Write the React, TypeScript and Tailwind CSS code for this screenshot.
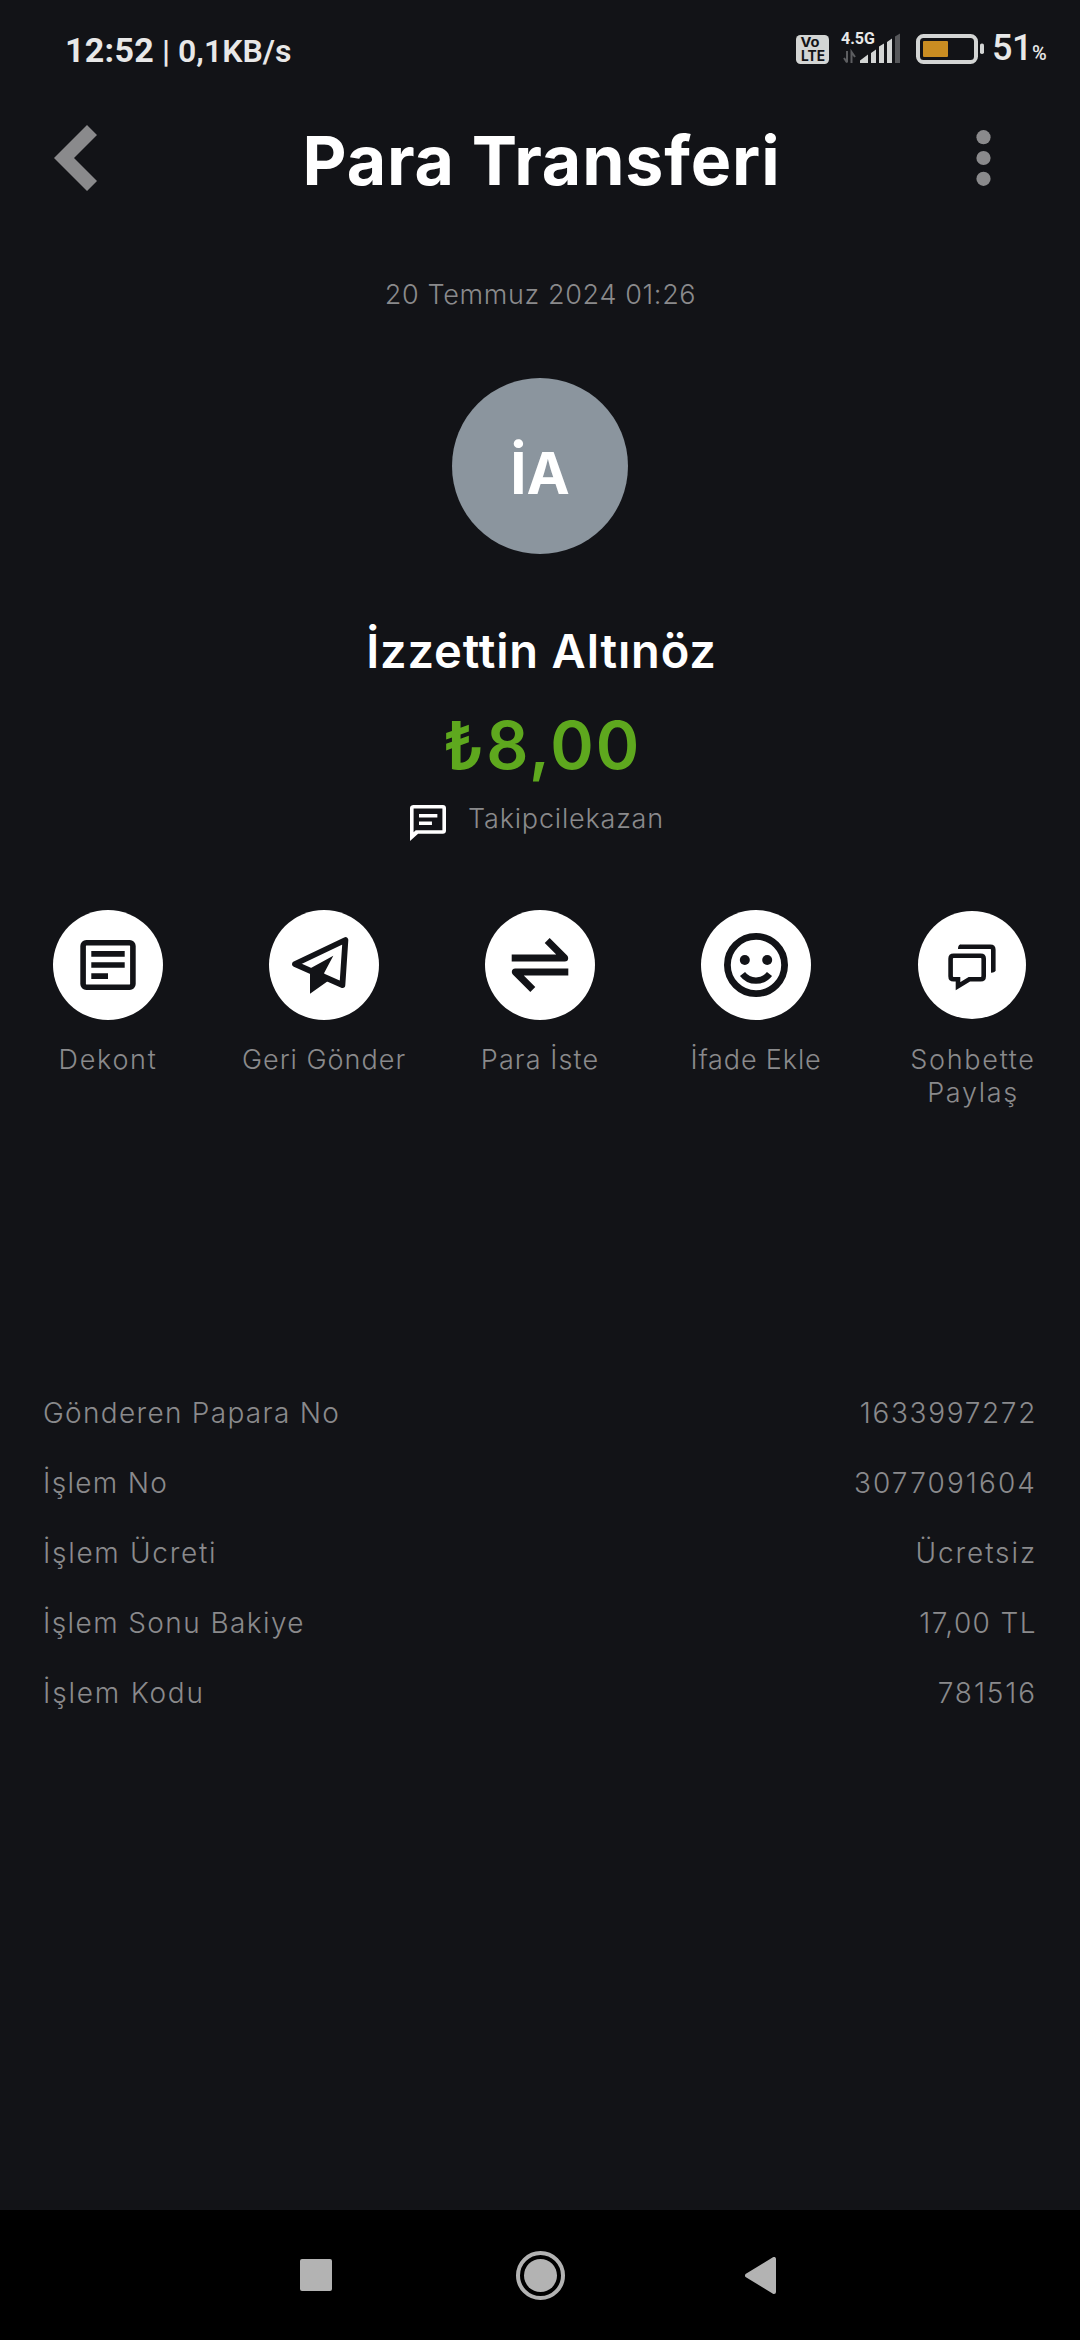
import type { ReactNode } from 'react';

interface Action {
  label: string;
  icon: ReactNode;
  size: string;
  spacing: string;
}

const INK = '#121317';

function ReceiptIcon() {
  return (
    <svg className="h-full w-full" viewBox="0 0 110 110" fill="none" stroke={INK} strokeWidth={5.6}>
      <rect x="30.1" y="32.8" width="49.8" height="44.4" rx="3.2" />
      <path d="M38.3 43.9H71.7M38.3 55H71.7M38.3 66.1H55" />
    </svg>
  );
}

function SendIcon() {
  return (
    <svg className="h-full w-full" viewBox="0 0 110 110" fill="none">
      <path d="M26 54L76.4 30L73.4 75Z" stroke={INK} strokeWidth={5.8} strokeLinejoin="round" />
      <path d="M41 58.5L64.3 45.7L55 63.3L59 71L41 83.7Z" fill={INK} />
    </svg>
  );
}

function SwapIcon() {
  return (
    <svg className="h-full w-full" viewBox="0 0 110 110" fill="none" stroke={INK} strokeWidth={7} strokeLinejoin="round">
      <path d="M26.7 48H79.7L62.2 30.5" />
      <path d="M83.3 62H30.3L47.8 79.5" />
    </svg>
  );
}

function SmileIcon() {
  return (
    <svg className="h-full w-full" viewBox="0 0 110 110" fill="none" stroke={INK}>
      <circle cx="55" cy="55" r="28.6" strokeWidth={6.8} />
      <circle cx="43.8" cy="50" r="5" fill={INK} stroke="none" />
      <circle cx="66.2" cy="50" r="5" fill={INK} stroke="none" />
      <path d="M41.5 64A17 17 0 0 0 68.5 64" strokeWidth={6.4} />
    </svg>
  );
}

function ShareChatIcon() {
  return (
    <svg className="h-full w-full" viewBox="0 0 108 108" fill="none" stroke={INK} strokeWidth={4.6}>
      <path d="M35.6 44.7H62.7Q65.7 44.7 65.7 47.7V65.3Q65.7 68.3 62.7 68.3H51.3L40 75.2V68.3H35.6Q32.6 68.3 32.6 65.3V47.7Q32.6 44.7 35.6 44.7Z" />
      <path d="M42 35.7H72.3Q75.3 35.7 75.3 38.7V59.5" />
      <path d="M42.2 33.4Q40 34 40 38H43ZM77.6 59Q77.4 61.6 73 61.8V59Z" fill={INK} stroke="none" />
    </svg>
  );
}

const actions: Action[] = [
  { label: 'Dekont', icon: <ReceiptIcon />, size: 'size-[110px]', spacing: 'tracking-[1.7px]' },
  { label: 'Geri Gönder', icon: <SendIcon />, size: 'size-[110px]', spacing: 'tracking-[1px]' },
  { label: 'Para İste', icon: <SwapIcon />, size: 'size-[110px]', spacing: 'tracking-[1.1px]' },
  { label: 'İfade Ekle', icon: <SmileIcon />, size: 'size-[110px]', spacing: 'tracking-[0.85px]' },
  { label: 'Sohbette Paylaş', icon: <ShareChatIcon />, size: 'size-[108px] m-px', spacing: 'pl-[2px] tracking-[1.7px]' },
];

const details = [
  { label: 'Gönderen Papara No', value: '1633997272', spacing: 'tracking-[1.3px]', valueSpacing: 'tracking-[1.65px]' },
  { label: 'İşlem No', value: '3077091604', spacing: 'tracking-[1.3px]', valueSpacing: 'tracking-[2.1px]' },
  { label: 'İşlem Ücreti', value: 'Ücretsiz', spacing: 'tracking-[1.7px]', valueSpacing: 'tracking-[1.9px]' },
  { label: 'İşlem Sonu Bakiye', value: '17,00 TL', spacing: 'tracking-[1.4px]', valueSpacing: 'tracking-[1.4px]' },
  { label: 'İşlem Kodu', value: '781516', spacing: 'tracking-[1.8px]', valueSpacing: 'tracking-[1.9px]' },
];

function StatusBar() {
  return (
    <div className="flex h-[98px] items-center pl-[65px] font-['Roboto',sans-serif] font-medium text-[#e8e8e8]">
      <div className="flex w-[731px] items-baseline gap-[8px] pt-[2px] leading-[98px] whitespace-pre">
        <span className="text-[34px] font-bold tracking-[0.3px]">12:52</span>
        <span className="text-[32px] font-semibold">| 0,1KB/s</span>
      </div>
      {/* VoLTE */}
      <svg className="h-[30px] w-[33px] shrink-0" viewBox="0 0 33 30">
        <rect y="1" width="33" height="29" rx="4.5" fill="#d3d5d4" />
        <text x="4.5" y="13.3" fontSize="13" fontWeight="700" fontFamily="Inter, sans-serif" textLength="19" lengthAdjust="spacingAndGlyphs" fill={INK}>Vo</text>
        <text x="5" y="26.8" fontSize="14" fontWeight="700" fontFamily="Inter, sans-serif" textLength="24" lengthAdjust="spacingAndGlyphs" fill={INK}>LTE</text>
      </svg>
      {/* Signal */}
      <svg className="ml-[12px] h-[30px] w-[59px] shrink-0 overflow-visible" viewBox="0 0 59 30">
        <text x="0" y="10" fontSize="16" fontWeight="700" fontFamily="Roboto, sans-serif" fill="#e8e8e8">4.5G</text>
        <path d="M6 17V28.5M3 24L6 28.5M10.5 29V18L14 23" fill="none" stroke="#5c5d60" strokeWidth="2" />
        <path d="M19 29V26.5L27 20.5V29ZM30 29V19L35 15.5V29ZM38 29V12.5L43 9.5V29ZM46 29V8L51 4.5V29Z" fill="#d3d5d4" />
        <path d="M54 29V2.5L59 -0.5V29Z" fill="#56575a" />
      </svg>
      {/* Battery */}
      <svg className="ml-[16px] h-[30px] w-[68px] shrink-0" viewBox="0 0 68 30">
        <rect x="2" y="2" width="58" height="26" rx="5.5" fill="none" stroke="#d3d5d4" strokeWidth="4" />
        <rect x="7" y="7" width="25" height="16" rx="1" fill="#c98d22" />
        <rect x="64" y="9.5" width="4" height="10.5" rx="1.8" fill="#d3d5d4" />
      </svg>
      <div className="flex items-baseline pt-[3px] pl-[8px] leading-[98px]">
        <span className="text-[36px] -tracking-[0.5px]">51</span>
        <span className="text-[20px]">%</span>
      </div>
    </div>
  );
}

function Header() {
  return (
    <header className="flex h-[120px] items-center">
      <button className="w-[200px] pl-[54px]">
        <svg className="h-[66px] w-[43px]" viewBox="0 0 43 66" fill="#8a8a8c">
          <path d="M33 0L43 10L20 33L43 56L33 66L0 33Z" />
        </svg>
      </button>
      <h1 className="flex-1 pt-[4px] pl-[3px] text-center text-[68px] leading-[80px] font-bold tracking-[0.85px] whitespace-nowrap text-white">
        Para Transferi
      </h1>
      <button className="flex w-[200px] justify-end pr-[89px]">
        <svg className="h-[56px] w-[15px]" viewBox="0 0 15 56" fill="#8a8a8c">
          <circle cx="7.5" cy="7.2" r="7.1" />
          <circle cx="7.5" cy="28" r="7.1" />
          <circle cx="7.5" cy="48.8" r="7.1" />
        </svg>
      </button>
    </header>
  );
}

function NavBar() {
  return (
    <nav className="mt-auto flex h-[130px] items-center bg-black pl-[300px]">
      <div className="size-[32px] rounded-[2px] bg-[#b3b3b3]" />
      <svg className="ml-[184px] size-[49px]" viewBox="0 0 49 49">
        <circle cx="24.5" cy="24.5" r="22.5" fill="none" stroke="#b3b3b3" strokeWidth="4" />
        <circle cx="24.5" cy="24.5" r="16.5" fill="#b3b3b3" />
      </svg>
      <svg className="ml-[180px] h-[37px] w-[31px]" viewBox="0 0 31 37">
        <path d="M2 18.5L29 2V35Z" fill="#b3b3b3" stroke="#b3b3b3" strokeWidth="4" strokeLinejoin="round" />
      </svg>
    </nav>
  );
}

export default function App() {
  return (
    <div className="flex h-[2340px] w-[1080px] flex-col overflow-hidden bg-[#121317] font-['Inter',sans-serif] text-[#8a8a8c]">
      <StatusBar />
      <Header />

      <main className="flex flex-col">
        <section className="flex flex-col items-center">
          <p className="mt-[57px] pl-[1px] text-[27px] leading-[40px] font-[350] tracking-[0.65px]">20 Temmuz 2024 01:26</p>
          <div className="mt-[63px] flex size-[176px] items-center justify-center rounded-full bg-[#8b959e] pt-[14px] text-[58px] leading-[60px] font-bold text-white">
            İA
          </div>
          <h2 className="mt-[67px] pl-[3px] text-[47px] leading-[60px] font-semibold tracking-[0.85px] text-white">İzzettin Altınöz</h2>
          <p className="mt-[24px] pl-[4px] text-[66px] leading-[80px] font-semibold tracking-[2px] text-[#5ea81e]">₺8,00</p>
          <div className="mt-[14px] flex h-[48px] gap-[22px] pr-[6px]">
            <svg className="mt-[6px] size-[36px]" viewBox="2 2 20 20" fill="#ffffff">
              <path d="M4 4h16v12H5.17L4 17.17V4m0-2c-1.1 0-2 .6-2 1.7V22l4.5-4H20.3c1 0 1.7-.7 1.7-1.7V3.7C22 2.7 21.3 2 20.3 2H4z" />
              <path d="M7 7h10.2v1.9H7zM7 11.2h7.2v1.9H7z" />
            </svg>
            <span className="text-[27px] leading-[40px] font-[350] tracking-[0.8px]">Takipcilekazan</span>
          </div>
        </section>

        <section className="mt-[63px] grid h-[199px] grid-cols-5">
          {actions.map(action => (
            <button key={action.label} className="flex flex-col items-center">
              <div className={`rounded-full bg-white ${action.size}`}>{action.icon}</div>
              <span className={`mt-[23px] w-[180px] text-center text-[27px] leading-[33px] font-[350] ${action.spacing}`}>
                {action.label}
              </span>
            </button>
          ))}
        </section>

        <section className="mt-[269px] pr-[43px] pl-[43px]">
          {details.map(row => (
            <div key={row.label} className="flex h-[70px] items-center justify-between text-[28px] font-[350]">
              <span className={row.spacing}>{row.label}</span>
              <span className={row.valueSpacing}>{row.value}</span>
            </div>
          ))}
        </section>
      </main>

      <NavBar />
    </div>
  );
}
